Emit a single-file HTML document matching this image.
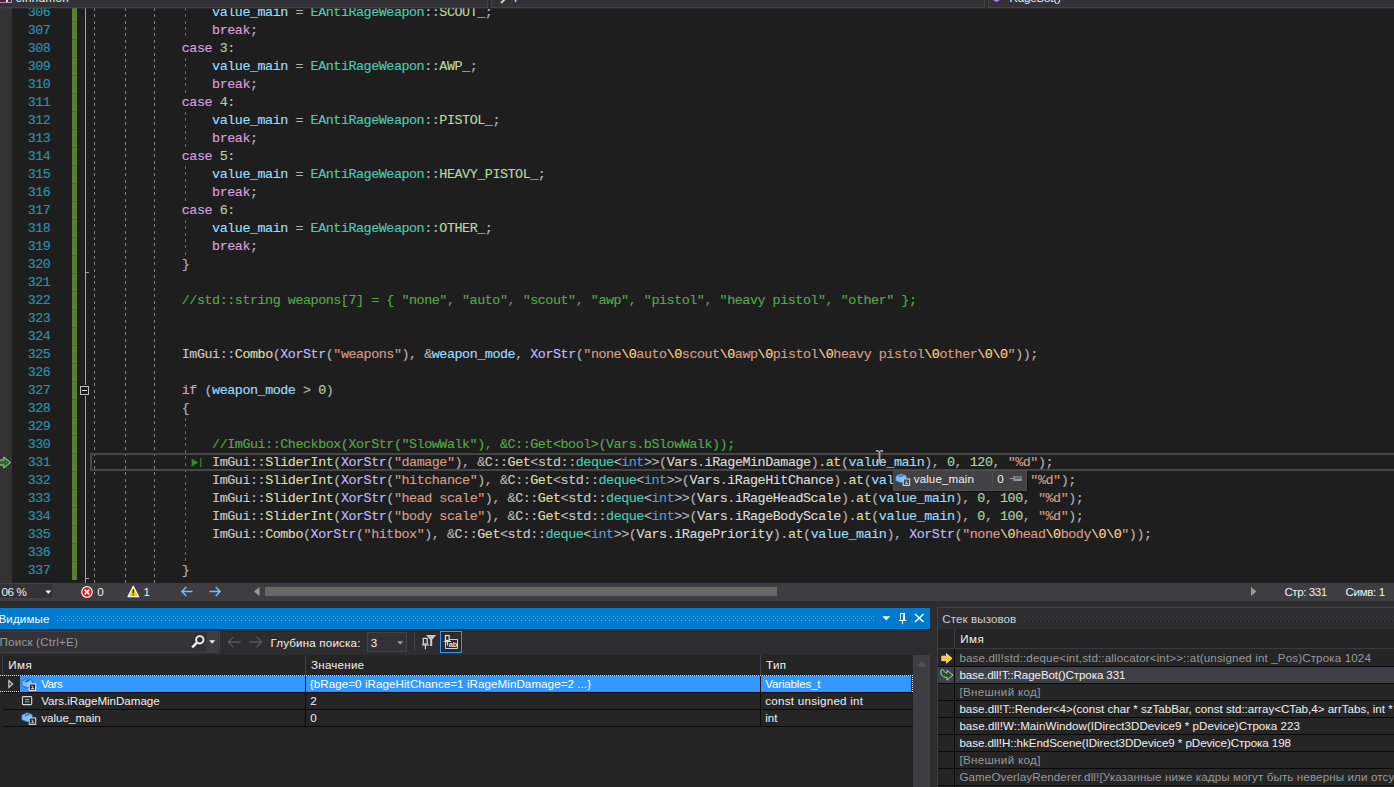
<!DOCTYPE html>
<html lang="ru"><head><meta charset="utf-8"><title>Visual Studio</title>
<style>
html,body{margin:0;padding:0;background:#1e1e1e;overflow:hidden}
html{width:1394px;height:787px}
body{width:1394px;height:787px;position:relative;overflow:hidden;font-family:"Liberation Sans",sans-serif;font-size:12px;color:#f1f1f1}
.a{position:absolute;box-sizing:content-box}
svg.a{overflow:visible}
.g{position:absolute;width:1px;background:repeating-linear-gradient(180deg,#828282 0 3px,transparent 3px 6.36px)}
.g2{position:absolute;width:1px;background:repeating-linear-gradient(180deg,#6a6a6a 0 3px,transparent 3px 6.36px)}
.ln,.cl{position:absolute;height:18px;line-height:18px;font-family:"Liberation Mono",monospace;font-size:13.4px;letter-spacing:-0.4613px;white-space:pre;margin-top:0.0px;-webkit-text-stroke:0.15px}
.ln{left:0;width:50.36px;text-align:right;color:#2b91af}
.cl{left:90.9px;color:#dcdcdc}
.u{position:absolute;white-space:pre;line-height:16px;height:16px}
.c{color:#d8a0df}.k{color:#569cd6}.v{color:#9cdcfe}.t{color:#4ec9b0}.e{color:#b8d7a3}.o{color:#b4b4b4}
.n{color:#b5cea8}.s{color:#d69d85}.x{color:#ffd68f}.f{color:#dcdcaa}.m{color:#beb7ff}.ns{color:#c8c8c8}.i{color:#dadada}.cm{color:#57a64a}
.dots{position:absolute;background-image:radial-gradient(circle at 0.5px 0.5px,#59a8de 0.55px,transparent 0.8px),radial-gradient(circle at 0.5px 0.5px,#59a8de 0.55px,transparent 0.8px);background-size:4px 4px;background-position:0 0,2px 2px}
.dots2{position:absolute;background-image:radial-gradient(circle at 0.5px 0.5px,#46464a 0.55px,transparent 0.8px),radial-gradient(circle at 0.5px 0.5px,#46464a 0.55px,transparent 0.8px);background-size:4px 4px;background-position:0 0,2px 2px}
.dot-h{position:absolute;height:1px;background:repeating-linear-gradient(90deg,#e8e8e8 0 1px,transparent 1px 2px)}
</style></head>
<body>
<div class="a" style="left:0;top:0;width:1394px;height:583px;background:#1e1e1e"></div>
<div class="a" style="left:0;top:8px;width:12px;height:575px;background:#333333"></div>
<div class="a" style="left:72px;top:8px;width:5px;height:572px;background:#5a7d32"></div>
<div class="a" style="left:72px;top:21px;width:5px;height:1px;background:#4b6c27"></div>
<div class="a" style="left:72px;top:39px;width:5px;height:1px;background:#4b6c27"></div>
<div class="a" style="left:72px;top:57px;width:5px;height:1px;background:#4b6c27"></div>
<div class="a" style="left:72px;top:75px;width:5px;height:1px;background:#4b6c27"></div>
<div class="a" style="left:72px;top:93px;width:5px;height:1px;background:#4b6c27"></div>
<div class="a" style="left:72px;top:111px;width:5px;height:1px;background:#4b6c27"></div>
<div class="a" style="left:72px;top:129px;width:5px;height:1px;background:#4b6c27"></div>
<div class="a" style="left:72px;top:147px;width:5px;height:1px;background:#4b6c27"></div>
<div class="a" style="left:72px;top:165px;width:5px;height:1px;background:#4b6c27"></div>
<div class="a" style="left:72px;top:183px;width:5px;height:1px;background:#4b6c27"></div>
<div class="a" style="left:72px;top:201px;width:5px;height:1px;background:#4b6c27"></div>
<div class="a" style="left:72px;top:219px;width:5px;height:1px;background:#4b6c27"></div>
<div class="a" style="left:72px;top:237px;width:5px;height:1px;background:#4b6c27"></div>
<div class="a" style="left:72px;top:255px;width:5px;height:1px;background:#4b6c27"></div>
<div class="a" style="left:72px;top:273px;width:5px;height:1px;background:#4b6c27"></div>
<div class="a" style="left:72px;top:291px;width:5px;height:1px;background:#4b6c27"></div>
<div class="a" style="left:72px;top:309px;width:5px;height:1px;background:#4b6c27"></div>
<div class="a" style="left:72px;top:327px;width:5px;height:1px;background:#4b6c27"></div>
<div class="a" style="left:72px;top:345px;width:5px;height:1px;background:#4b6c27"></div>
<div class="a" style="left:72px;top:363px;width:5px;height:1px;background:#4b6c27"></div>
<div class="a" style="left:72px;top:381px;width:5px;height:1px;background:#4b6c27"></div>
<div class="a" style="left:72px;top:399px;width:5px;height:1px;background:#4b6c27"></div>
<div class="a" style="left:72px;top:417px;width:5px;height:1px;background:#4b6c27"></div>
<div class="a" style="left:72px;top:435px;width:5px;height:1px;background:#4b6c27"></div>
<div class="a" style="left:72px;top:453px;width:5px;height:1px;background:#4b6c27"></div>
<div class="a" style="left:72px;top:471px;width:5px;height:1px;background:#4b6c27"></div>
<div class="a" style="left:72px;top:489px;width:5px;height:1px;background:#4b6c27"></div>
<div class="a" style="left:72px;top:507px;width:5px;height:1px;background:#4b6c27"></div>
<div class="a" style="left:72px;top:525px;width:5px;height:1px;background:#4b6c27"></div>
<div class="a" style="left:72px;top:543px;width:5px;height:1px;background:#4b6c27"></div>
<div class="a" style="left:72px;top:561px;width:5px;height:1px;background:#4b6c27"></div>
<div class="a" style="left:85px;top:8px;width:1px;height:575px;background:#a5a5a5"></div>
<div class="a" style="left:86px;top:272px;width:3px;height:1px;background:#a5a5a5"></div>
<div class="a" style="left:86px;top:578px;width:3px;height:1px;background:#a5a5a5"></div>
<div class="g" style="left:94px;top:8px;height:575px"></div>
<div class="g" style="left:125px;top:8px;height:575px"></div>
<div class="g" style="left:154px;top:8px;height:575px"></div>
<div class="g2" style="left:185px;top:8px;height:32px"></div>
<div class="g2" style="left:185px;top:58px;height:36px"></div>
<div class="g2" style="left:185px;top:112px;height:36px"></div>
<div class="g2" style="left:185px;top:166px;height:36px"></div>
<div class="g2" style="left:185px;top:220px;height:36px"></div>
<div class="g2" style="left:185px;top:418px;height:144px"></div>
<div class="a" style="left:90px;top:453px;width:1310px;height:14px;border:2px solid #464646"></div>
<div class="a" style="left:79px;top:385px;width:11px;height:11px;background:#1e1e1e"></div>
<div class="a" style="left:80px;top:386px;width:7px;height:7px;border:1px solid #c0c0c0;background:#1e1e1e"></div>
<div class="a" style="left:82px;top:390px;width:5px;height:1px;background:#e0e0e0"></div>
<div class="ln" style="top:4px">306</div>
<div class="cl" style="top:4px">                <span class="v">value_main</span><span class="o"> = </span><span class="t">EAntiRageWeapon</span><span class="o">::</span><span class="e">SCOUT_</span><span class="o">;</span></div>
<div class="ln" style="top:22px">307</div>
<div class="cl" style="top:22px">                <span class="c">break</span><span class="o">;</span></div>
<div class="ln" style="top:40px">308</div>
<div class="cl" style="top:40px">            <span class="c">case</span> <span class="n">3</span><span class="o">:</span></div>
<div class="ln" style="top:58px">309</div>
<div class="cl" style="top:58px">                <span class="v">value_main</span><span class="o"> = </span><span class="t">EAntiRageWeapon</span><span class="o">::</span><span class="e">AWP_</span><span class="o">;</span></div>
<div class="ln" style="top:76px">310</div>
<div class="cl" style="top:76px">                <span class="c">break</span><span class="o">;</span></div>
<div class="ln" style="top:94px">311</div>
<div class="cl" style="top:94px">            <span class="c">case</span> <span class="n">4</span><span class="o">:</span></div>
<div class="ln" style="top:112px">312</div>
<div class="cl" style="top:112px">                <span class="v">value_main</span><span class="o"> = </span><span class="t">EAntiRageWeapon</span><span class="o">::</span><span class="e">PISTOL_</span><span class="o">;</span></div>
<div class="ln" style="top:130px">313</div>
<div class="cl" style="top:130px">                <span class="c">break</span><span class="o">;</span></div>
<div class="ln" style="top:148px">314</div>
<div class="cl" style="top:148px">            <span class="c">case</span> <span class="n">5</span><span class="o">:</span></div>
<div class="ln" style="top:166px">315</div>
<div class="cl" style="top:166px">                <span class="v">value_main</span><span class="o"> = </span><span class="t">EAntiRageWeapon</span><span class="o">::</span><span class="e">HEAVY_PISTOL_</span><span class="o">;</span></div>
<div class="ln" style="top:184px">316</div>
<div class="cl" style="top:184px">                <span class="c">break</span><span class="o">;</span></div>
<div class="ln" style="top:202px">317</div>
<div class="cl" style="top:202px">            <span class="c">case</span> <span class="n">6</span><span class="o">:</span></div>
<div class="ln" style="top:220px">318</div>
<div class="cl" style="top:220px">                <span class="v">value_main</span><span class="o"> = </span><span class="t">EAntiRageWeapon</span><span class="o">::</span><span class="e">OTHER_</span><span class="o">;</span></div>
<div class="ln" style="top:238px">319</div>
<div class="cl" style="top:238px">                <span class="c">break</span><span class="o">;</span></div>
<div class="ln" style="top:256px">320</div>
<div class="cl" style="top:256px">            <span class="o">}</span></div>
<div class="ln" style="top:274px">321</div>
<div class="ln" style="top:292px">322</div>
<div class="cl" style="top:292px">            <span class="cm">//std::string weapons[7] = { "none", "auto", "scout", "awp", "pistol", "heavy pistol", "other" };</span></div>
<div class="ln" style="top:310px">323</div>
<div class="ln" style="top:328px">324</div>
<div class="ln" style="top:346px">325</div>
<div class="cl" style="top:346px">            <span class="ns">ImGui</span><span class="o">::</span><span class="f">Combo</span><span class="o">(</span><span class="m">XorStr</span><span class="o">(</span><span class="s">"weapons"</span><span class="o">), &amp;</span><span class="v">weapon_mode</span><span class="o">, </span><span class="m">XorStr</span><span class="o">(</span><span class="s">"none</span><span class="x">\0</span><span class="s">auto</span><span class="x">\0</span><span class="s">scout</span><span class="x">\0</span><span class="s">awp</span><span class="x">\0</span><span class="s">pistol</span><span class="x">\0</span><span class="s">heavy pistol</span><span class="x">\0</span><span class="s">other</span><span class="x">\0</span><span class="x">\0</span><span class="s">"</span><span class="o">));</span></div>
<div class="ln" style="top:364px">326</div>
<div class="ln" style="top:382px">327</div>
<div class="cl" style="top:382px">            <span class="c">if</span><span class="o"> (</span><span class="v">weapon_mode</span><span class="o"> &gt; </span><span class="n">0</span><span class="o">)</span></div>
<div class="ln" style="top:400px">328</div>
<div class="cl" style="top:400px">            <span class="o">{</span></div>
<div class="ln" style="top:418px">329</div>
<div class="ln" style="top:436px">330</div>
<div class="cl" style="top:436px">                <span class="cm">//ImGui::Checkbox(XorStr("SlowWalk"), &amp;C::Get&lt;bool&gt;(Vars.bSlowWalk));</span></div>
<div class="ln" style="top:454px">331</div>
<div class="cl" style="top:454px">                <span class="ns">ImGui</span><span class="o">::</span><span class="f">SliderInt</span><span class="o">(</span><span class="m">XorStr</span><span class="o">(</span><span class="s">"damage"</span><span class="o">), &amp;</span><span class="ns">C</span><span class="o">::</span><span class="f">Get</span><span class="o">&lt;</span><span class="ns">std</span><span class="o">::</span><span class="t">deque</span><span class="o">&lt;</span><span class="k">int</span><span class="o">&gt;&gt;(</span><span class="i">Vars</span><span class="o">.</span><span class="i">iRageMinDamage</span><span class="o">).</span><span class="f">at</span><span class="o">(</span><span class="v">value_main</span><span class="o">), </span><span class="n">0</span><span class="o">, </span><span class="n">120</span><span class="o">, </span><span class="s">"%d"</span><span class="o">);</span></div>
<div class="ln" style="top:472px">332</div>
<div class="cl" style="top:472px">                <span class="ns">ImGui</span><span class="o">::</span><span class="f">SliderInt</span><span class="o">(</span><span class="m">XorStr</span><span class="o">(</span><span class="s">"hitchance"</span><span class="o">), &amp;</span><span class="ns">C</span><span class="o">::</span><span class="f">Get</span><span class="o">&lt;</span><span class="ns">std</span><span class="o">::</span><span class="t">deque</span><span class="o">&lt;</span><span class="k">int</span><span class="o">&gt;&gt;(</span><span class="i">Vars</span><span class="o">.</span><span class="i">iRageHitChance</span><span class="o">).</span><span class="f">at</span><span class="o">(</span><span class="v">value_main</span><span class="o">), </span><span class="n">0</span><span class="o">, </span><span class="n">100</span><span class="o">, </span><span class="s">"%d"</span><span class="o">);</span></div>
<div class="ln" style="top:490px">333</div>
<div class="cl" style="top:490px">                <span class="ns">ImGui</span><span class="o">::</span><span class="f">SliderInt</span><span class="o">(</span><span class="m">XorStr</span><span class="o">(</span><span class="s">"head scale"</span><span class="o">), &amp;</span><span class="ns">C</span><span class="o">::</span><span class="f">Get</span><span class="o">&lt;</span><span class="ns">std</span><span class="o">::</span><span class="t">deque</span><span class="o">&lt;</span><span class="k">int</span><span class="o">&gt;&gt;(</span><span class="i">Vars</span><span class="o">.</span><span class="i">iRageHeadScale</span><span class="o">).</span><span class="f">at</span><span class="o">(</span><span class="v">value_main</span><span class="o">), </span><span class="n">0</span><span class="o">, </span><span class="n">100</span><span class="o">, </span><span class="s">"%d"</span><span class="o">);</span></div>
<div class="ln" style="top:508px">334</div>
<div class="cl" style="top:508px">                <span class="ns">ImGui</span><span class="o">::</span><span class="f">SliderInt</span><span class="o">(</span><span class="m">XorStr</span><span class="o">(</span><span class="s">"body scale"</span><span class="o">), &amp;</span><span class="ns">C</span><span class="o">::</span><span class="f">Get</span><span class="o">&lt;</span><span class="ns">std</span><span class="o">::</span><span class="t">deque</span><span class="o">&lt;</span><span class="k">int</span><span class="o">&gt;&gt;(</span><span class="i">Vars</span><span class="o">.</span><span class="i">iRageBodyScale</span><span class="o">).</span><span class="f">at</span><span class="o">(</span><span class="v">value_main</span><span class="o">), </span><span class="n">0</span><span class="o">, </span><span class="n">100</span><span class="o">, </span><span class="s">"%d"</span><span class="o">);</span></div>
<div class="ln" style="top:526px">335</div>
<div class="cl" style="top:526px">                <span class="ns">ImGui</span><span class="o">::</span><span class="f">Combo</span><span class="o">(</span><span class="m">XorStr</span><span class="o">(</span><span class="s">"hitbox"</span><span class="o">), &amp;</span><span class="ns">C</span><span class="o">::</span><span class="f">Get</span><span class="o">&lt;</span><span class="ns">std</span><span class="o">::</span><span class="t">deque</span><span class="o">&lt;</span><span class="k">int</span><span class="o">&gt;&gt;(</span><span class="i">Vars</span><span class="o">.</span><span class="i">iRagePriority</span><span class="o">).</span><span class="f">at</span><span class="o">(</span><span class="v">value_main</span><span class="o">), </span><span class="m">XorStr</span><span class="o">(</span><span class="s">"none</span><span class="x">\0</span><span class="s">head</span><span class="x">\0</span><span class="s">body</span><span class="x">\0</span><span class="x">\0</span><span class="s">"</span><span class="o">));</span></div>
<div class="ln" style="top:544px">336</div>
<div class="ln" style="top:562px">337</div>
<div class="cl" style="top:562px">            <span class="o">}</span></div>
<div class="ln" style="top:580px">338</div>
<svg class="a" style="left:191px;top:458.4px;" width="12" height="10" viewBox="0 0 12 10"><path d="M0.6 0.4 L7.2 4.5 L0.6 8.7z" fill="#2f8c2f"/><rect x="9" y="0" width="1.5" height="9.1" fill="#27782a"/></svg>
<svg class="a" style="left:0px;top:455.5px;" width="12" height="13" viewBox="0 0 12 13"><path d="M-2 4 H3.8 V1 L10.6 6.5 L3.8 12 V9 H-2z" fill="#2b6f2b" stroke="#c4c4c4" stroke-width="1" stroke-linejoin="miter"/></svg>
<svg class="a" style="left:875px;top:450px;" width="9" height="13" viewBox="0 0 9 13"><path d="M1 0.8 H3.6 M5.4 0.8 H8 M1 12.2 H3.6 M5.4 12.2 H8 M4.5 1 V12" stroke="#a8a8a8" stroke-width="1.8" fill="none"/></svg>
<div class="a" style="left:893px;top:470px;width:132px;height:19px;background:#424245;border:1px solid #4d4d50;box-shadow:1px 1px 1px rgba(0,0,0,.35)"></div>
<svg class="a" style="left:895.3px;top:473.2px;" width="16" height="14" viewBox="0 0 16 14"><path d="M0.8 3.8 Q0.8 3.1 1.5 2.7 L5.3 1 Q6 0.7 6.8 0.9 L10.6 2.3 Q11.3 2.6 11.3 3.3 L11.3 7 Q11.3 7.6 10.7 8 L7 9.6 Q6.2 9.9 5.4 9.6 L1.4 8 Q0.8 7.6 0.8 7z" fill="#75beff" stroke="#2f6fae" stroke-width="0.7"/><path d="M4.4 3.5 L7.6 2.3" stroke="#2f6fae" stroke-width="1.3" fill="none" stroke-linecap="round"/><rect x="8.2" y="5.9" width="6.4" height="6.5" fill="#424245" stroke="#d4d4d4" stroke-width="1.1"/><path d="M10.4 8.2 h1.3 v2.3 M10.1 10.6 h3" stroke="#d4d4d4" stroke-width="0.9" fill="none"/></svg>
<div class="a" style="left:992px;top:472px;width:1px;height:16px;background:#4f4f52"></div>
<svg class="a" style="left:1009px;top:474px;" width="13" height="10" viewBox="0 0 13 10"><path d="M0.4 4.5 H4.8 M4.9 2 V7" stroke="#9a9a9a" stroke-width="1" fill="none"/><rect x="5.4" y="2.9" width="6.6" height="3.4" fill="none" stroke="#9a9a9a" stroke-width="1"/><rect x="5" y="4.7" width="7.5" height="2.1" fill="#9a9a9a"/></svg>
<div class="a" style="left:0;top:0;width:1394px;height:7px;background:#333337;border-bottom:1px solid #434346"></div>
<div class="a" style="left:0;top:8px;width:1394px;height:1px;background:rgba(67,67,70,0.35)"></div>
<div class="a" style="left:487px;top:0;width:3px;height:8px;background:#2d2d30;border-left:1px solid #434346;border-right:1px solid #434346"></div>
<div class="a" style="left:984px;top:0;width:3px;height:8px;background:#2d2d30;border-left:1px solid #434346;border-right:1px solid #434346"></div>
<div class="a" style="left:-1px;top:-10px;width:11px;height:11px;border:1px solid #c586c0"></div>
<div class="a" style="left:6px;top:-6px;width:2px;height:8px;background:#e0e0e0"></div>
<svg class="a" style="left:500px;top:-4px;" width="8" height="8" viewBox="0 0 8 8"><path d="M1 7 L6 2" stroke="#d0d0d0" stroke-width="2"/></svg>
<svg class="a" style="left:992px;top:-6px;" width="9" height="8" viewBox="0 0 9 8"><path d="M1 2 L4.5 0 L8 2 V6 L4.5 8 L1 6z" fill="#b180d7"/></svg>
<div class="a" style="left:0;top:583px;width:1394px;height:18px;background:#3e3e42"></div>
<div class="a" style="left:0;top:601px;width:1394px;height:186px;background:#2d2d30"></div>
<div class="a" style="left:-1px;top:583px;width:53px;height:14px;background:#333337;border:1px solid #434346"></div>
<svg class="a" style="left:45px;top:590px;" width="7" height="5" viewBox="0 0 7 5"><path d="M0.3 0.5 H6.3 L3.3 4z" fill="#f1f1f1"/></svg>
<svg class="a" style="left:80px;top:585px;" width="14" height="14" viewBox="0 0 14 14"><circle cx="7" cy="7" r="5.3" fill="#e51400" stroke="#f6f6f6" stroke-width="1.2"/><path d="M4.7 4.7 L9.3 9.3 M9.3 4.7 L4.7 9.3" stroke="#fff" stroke-width="1.7"/></svg>
<svg class="a" style="left:127px;top:585px;" width="13" height="13" viewBox="0 0 13 13"><path d="M6.3 1.2 L11.6 11.6 H1 z" fill="#ffcc00" stroke="#f6f6f6" stroke-width="1.2" stroke-linejoin="round"/><path d="M6.3 4.6 V8.3 M6.3 9.3 V10.6" stroke="#1e1e1e" stroke-width="1.4"/></svg>
<svg class="a" style="left:181px;top:586px;" width="12" height="11" viewBox="0 0 12 11"><path d="M11.5 5.5 H1.2 M5.3 1 L0.9 5.5 L5.3 10" stroke="#75beff" stroke-width="1.4" fill="none"/></svg>
<svg class="a" style="left:208.9px;top:586px;" width="12" height="11" viewBox="0 0 12 11"><path d="M0.5 5.5 H10.8 M6.7 1 L11.1 5.5 L6.7 10" stroke="#75beff" stroke-width="1.4" fill="none"/></svg>
<svg class="a" style="left:254px;top:587px;" width="6" height="9" viewBox="0 0 6 9"><path d="M5.5 0 V9 L0 4.5z" fill="#999999"/></svg>
<div class="a" style="left:265px;top:587px;width:512px;height:9px;background:#686868"></div>
<svg class="a" style="left:1251px;top:587px;" width="6" height="9" viewBox="0 0 6 9"><path d="M0 0 V9 L5.5 4.5z" fill="#999999"/></svg>
<div class="a" style="left:0;top:608px;width:930px;height:21px;background:#007acc"></div>
<div class="dots" style="left:57px;top:616px;width:818px;height:5px"></div>
<svg class="a" style="left:882px;top:616px;" width="9" height="5" viewBox="0 0 9 5"><path d="M0.3 0.3 H8.3 L4.3 4.5z" fill="#fff"/></svg>
<svg class="a" style="left:899px;top:613px;" width="8" height="12" viewBox="0 0 8 12"><path d="M1.5 6.5 V0.5 H5.5 V6.5" stroke="#fff" stroke-width="1" fill="none"/><rect x="4" y="0" width="2" height="7" fill="#fff"/><rect x="0" y="7" width="7.4" height="1" fill="#fff"/><rect x="3" y="8" width="1" height="3.2" fill="#fff"/></svg>
<svg class="a" style="left:914px;top:613px;" width="11" height="10" viewBox="0 0 11 10"><path d="M1 1 L9.5 9 M9.5 1 L1 9" stroke="#fff" stroke-width="1.5"/></svg>
<div class="a" style="left:0;top:629px;width:930px;height:26px;background:#2d2d30"></div>
<div class="a" style="left:-1px;top:631px;width:219px;height:20px;background:#333337;border:1px solid #3f3f46"></div>
<svg class="a" style="left:191px;top:635px;" width="14" height="14" viewBox="0 0 14 14"><circle cx="8.8" cy="4.8" r="3.7" fill="none" stroke="#f1f1f1" stroke-width="1.9"/><path d="M6 7.6 L1.2 12.4" stroke="#f1f1f1" stroke-width="2.4"/></svg>
<div class="a" style="left:207px;top:632px;width:11px;height:20px;background:#3e3e42"></div>
<svg class="a" style="left:209px;top:640px;" width="7" height="4" viewBox="0 0 7 4"><path d="M0.2 0.2 H6.2 L3.2 3.7z" fill="#f1f1f1"/></svg>
<svg class="a" style="left:227px;top:636px;" width="14" height="12" viewBox="0 0 14 12"><path d="M13.8 6 H1.5 M6.5 0.8 L1.2 6 L6.5 11.2" stroke="#555558" stroke-width="1.3" fill="none"/></svg>
<svg class="a" style="left:249px;top:636px;" width="14" height="12" viewBox="0 0 14 12"><path d="M0.2 6 H12.5 M7.5 0.8 L12.8 6 L7.5 11.2" stroke="#555558" stroke-width="1.3" fill="none"/></svg>
<div class="a" style="left:367px;top:632px;width:38px;height:18px;background:#333337;border:1px solid #434346"></div>
<svg class="a" style="left:397px;top:641px;" width="7" height="4" viewBox="0 0 7 4"><path d="M0.2 0.2 H6.2 L3.2 3.7z" fill="#999"/></svg>
<div class="a" style="left:414px;top:633px;width:1px;height:18px;background:#46464a"></div>
<svg class="a" style="left:421px;top:634px;" width="16" height="16" viewBox="0 0 16 16"><path d="M5 1.1 H15.2 L11.2 5.8 V12 H9.1 V5.8z" fill="#c8c8c8"/><rect x="2.3" y="4.4" width="3.9" height="5.6" fill="#2d2d30" stroke="#dedede" stroke-width="1.2"/><path d="M0.9 11 H8.2 M4.4 11 V15.2" stroke="#dedede" stroke-width="1.1"/></svg>
<div class="a" style="left:440px;top:631px;width:20px;height:20px;background:#2d2d30;border:1px solid #3399ff;box-shadow:inset 0 0 0 1px #242220"></div>
<svg class="a" style="left:443px;top:634px;" width="16" height="16" viewBox="0 0 16 16"><path d="M6 5.5 H14.5 V14.5 H2.5 V8" fill="none" stroke="#d0d0d0" stroke-width="1"/><rect x="2.5" y="1.5" width="3.6" height="5" fill="#2d2d30" stroke="#dedede" stroke-width="1.2"/><path d="M0.8 7.5 H8 M4.4 7.5 V11.4" stroke="#dedede" stroke-width="1.1"/><text x="5.8" y="12.7" font-family="Liberation Sans, sans-serif" font-size="7.5" font-weight="bold" fill="#e0e0e0" letter-spacing="-0.2">ab</text></svg>
<div class="a" style="left:0;top:655px;width:930px;height:132px;background:#252526"></div>
<div class="a" style="left:2px;top:655px;width:1px;height:20px;background:#3f3f46"></div>
<div class="a" style="left:305px;top:655px;width:1px;height:20px;background:#3f3f46"></div>
<div class="a" style="left:760px;top:655px;width:1px;height:20px;background:#3f3f46"></div>
<div class="a" style="left:913px;top:655px;width:17px;height:132px;background:#3e3e42"></div>
<svg class="a" style="left:917px;top:661px;" width="10" height="6" viewBox="0 0 10 6"><path d="M0 5.5 H9.4 L4.7 0z" fill="#55555a"/></svg>
<div class="a" style="left:20px;top:676px;width:285px;height:15px;background:#3399ff"></div>
<div class="a" style="left:306px;top:676px;width:454px;height:15px;background:#3399ff"></div>
<div class="a" style="left:761px;top:676px;width:150px;height:15px;background:#3399ff"></div>
<div class="dot-h" style="left:0;top:675px;width:913px"></div>
<div class="dot-h" style="left:0;top:691px;width:20px"></div>
<div class="a" style="left:20px;top:691px;width:893px;height:1px;background:repeating-linear-gradient(90deg,#cc6600 0 1px,#3399ff 1px 2px)"></div>
<div class="a" style="left:912px;top:675px;width:1px;height:17px;background:repeating-linear-gradient(180deg,#e8e8e8 0 1px,transparent 1px 2px)"></div>
<div class="a" style="left:3px;top:692px;width:910px;height:1px;background:#0a0a0a"></div>
<div class="a" style="left:3px;top:709px;width:910px;height:1px;background:#0a0a0a"></div>
<div class="a" style="left:3px;top:726px;width:910px;height:1px;background:#0a0a0a"></div>
<div class="a" style="left:305px;top:676px;width:1px;height:51px;background:#0a0a0a"></div>
<div class="a" style="left:760px;top:676px;width:1px;height:51px;background:#0a0a0a"></div>
<svg class="a" style="left:8.4px;top:680px;" width="6" height="9" viewBox="0 0 6 9"><path d="M0.9 0.6 L4.6 4 L0.9 7.4z" fill="none" stroke="#d0d0d0" stroke-width="1.2"/></svg>
<svg class="a" style="left:21px;top:678px;" width="16" height="14" viewBox="0 0 16 14"><path d="M0.8 3.8 Q0.8 3.1 1.5 2.7 L5.3 1 Q6 0.7 6.8 0.9 L10.6 2.3 Q11.3 2.6 11.3 3.3 L11.3 7 Q11.3 7.6 10.7 8 L7 9.6 Q6.2 9.9 5.4 9.6 L1.4 8 Q0.8 7.6 0.8 7z" fill="#75beff" stroke="#1d4f86" stroke-width="0.7"/><path d="M4.4 3.5 L7.6 2.3" stroke="#1d4f86" stroke-width="1.3" fill="none" stroke-linecap="round"/><rect x="8.2" y="5.9" width="6.4" height="6.5" fill="#252526" stroke="#e4e4e4" stroke-width="1.1"/><path d="M10.4 8.2 h1.3 v2.3 M10.1 10.6 h3" stroke="#e4e4e4" stroke-width="0.9" fill="none"/></svg>
<svg class="a" style="left:22px;top:696px;" width="11" height="10" viewBox="0 0 11 10"><rect x="0.5" y="0.6" width="9.2" height="8" rx="0.8" fill="none" stroke="#d8d8d8" stroke-width="1.1"/><path d="M3 3.6 H7.3 M3 5.8 H7.3" stroke="#75beff" stroke-width="1"/></svg>
<svg class="a" style="left:21px;top:712.3px;" width="16" height="14" viewBox="0 0 16 14"><path d="M0.8 3.8 Q0.8 3.1 1.5 2.7 L5.3 1 Q6 0.7 6.8 0.9 L10.6 2.3 Q11.3 2.6 11.3 3.3 L11.3 7 Q11.3 7.6 10.7 8 L7 9.6 Q6.2 9.9 5.4 9.6 L1.4 8 Q0.8 7.6 0.8 7z" fill="#75beff" stroke="#2f6fae" stroke-width="0.7"/><path d="M4.4 3.5 L7.6 2.3" stroke="#2f6fae" stroke-width="1.3" fill="none" stroke-linecap="round"/><rect x="8.2" y="5.9" width="6.4" height="6.5" fill="#252526" stroke="#d4d4d4" stroke-width="1.1"/><path d="M10.4 8.2 h1.3 v2.3 M10.1 10.6 h3" stroke="#d4d4d4" stroke-width="0.9" fill="none"/></svg>
<div class="a" style="left:937px;top:607px;width:460px;height:21px;background:#2d2d30;border:1px solid #3f3f46"></div>
<div class="dots2" style="left:1024px;top:616px;width:370px;height:5px"></div>
<div class="a" style="left:938px;top:629px;width:456px;height:158px;background:#252526"></div>
<div class="a" style="left:937px;top:629px;width:1px;height:158px;background:#3f3f46"></div>
<div class="a" style="left:938px;top:648px;width:456px;height:1px;background:#3a3a3f"></div>
<div class="a" style="left:954px;top:629px;width:1px;height:19px;background:#3f3f46"></div>
<div class="a" style="left:938px;top:667px;width:456px;height:16px;background:#3f3f46"></div>
<div class="a" style="left:938px;top:666px;width:456px;height:1px;background:#0a0a0a"></div>
<div class="a" style="left:938px;top:683px;width:456px;height:1px;background:#0a0a0a"></div>
<div class="a" style="left:938px;top:700px;width:456px;height:1px;background:#0a0a0a"></div>
<div class="a" style="left:938px;top:717px;width:456px;height:1px;background:#0a0a0a"></div>
<div class="a" style="left:938px;top:734px;width:456px;height:1px;background:#0a0a0a"></div>
<div class="a" style="left:938px;top:751px;width:456px;height:1px;background:#0a0a0a"></div>
<div class="a" style="left:938px;top:768px;width:456px;height:1px;background:#0a0a0a"></div>
<div class="a" style="left:938px;top:785px;width:456px;height:1px;background:#0a0a0a"></div>
<div class="a" style="left:954px;top:649px;width:1px;height:138px;background:#0a0a0a"></div>
<svg class="a" style="left:940.6px;top:652.6px;" width="12" height="11" viewBox="0 0 12 11"><path d="M0.8 3.2 H5.4 V0.7 L11 5.4 L5.4 10.1 V7.6 H0.8z" fill="#ffcc11" stroke="#efe7c8" stroke-width="0.9"/></svg>
<svg class="a" style="left:939.6px;top:668.6px;" width="14" height="12" viewBox="0 0 14 12"><path d="M1.2 0.9 C0.2 4.6 1.6 8.5 7 8.5 V11.2 L13 6.1 L7 1.3 V4 C5.4 4 4.3 3.2 3.7 1.1 Q2.4 0 1.2 0.9z" fill="#1f5d1f" stroke="#c4c4c4" stroke-width="1"/></svg>
<div class="u" style="left:913.75px;top:471.08px;color:#f1f1f1;font-size:11.6px;letter-spacing:0.090px;">value_main</div>
<div class="u" style="left:997.2px;top:471.08px;color:#f1f1f1;font-size:11.6px;">0</div>
<div class="u" style="left:15.8px;top:-9.92px;color:#f1f1f1;font-size:11.6px;letter-spacing:0.390px;">cinnamon</div>
<div class="u" style="left:512px;top:-9.92px;color:#f1f1f1;font-size:11.6px;">T</div>
<div class="u" style="left:1009.6px;top:-9.92px;color:#f1f1f1;font-size:11.6px;letter-spacing:-0.205px;">RageBot()</div>
<div class="u" style="left:1.5px;top:584.08px;color:#f1f1f1;font-size:11.6px;letter-spacing:-0.359px;">06 %</div>
<div class="u" style="left:97.3px;top:584.08px;color:#f1f1f1;font-size:11.6px;">0</div>
<div class="u" style="left:143.4px;top:584.08px;color:#f1f1f1;font-size:11.6px;">1</div>
<div class="u" style="left:1284.4px;top:584.08px;color:#f1f1f1;font-size:11.6px;letter-spacing:-0.453px;">Стр: 331</div>
<div class="u" style="left:1345.6px;top:584.08px;color:#f1f1f1;font-size:11.6px;letter-spacing:-0.382px;">Симв: 1</div>
<div class="u" style="left:-1.5px;top:611.08px;color:#ffffff;font-size:11.6px;letter-spacing:0.114px;">Видимые</div>
<div class="u" style="left:-0.5px;top:634.08px;color:#999999;font-size:11.6px;letter-spacing:0.206px;">Поиск (Ctrl+E)</div>
<div class="u" style="left:270.4px;top:635.08px;color:#f1f1f1;font-size:11.6px;letter-spacing:0.179px;">Глубина поиска:</div>
<div class="u" style="left:370.8px;top:635.08px;color:#f1f1f1;font-size:11.6px;">3</div>
<div class="u" style="left:8.2px;top:657.08px;color:#f1f1f1;font-size:11.6px;letter-spacing:0.469px;">Имя</div>
<div class="u" style="left:311px;top:657.08px;color:#f1f1f1;font-size:11.6px;letter-spacing:0.235px;">Значение</div>
<div class="u" style="left:766px;top:657.08px;color:#f1f1f1;font-size:11.6px;letter-spacing:0.391px;">Тип</div>
<div class="u" style="left:41.2px;top:676.08px;color:#ffffff;font-size:11.6px;letter-spacing:-0.496px;">Vars</div>
<div class="u" style="left:41.2px;top:693.08px;color:#f1f1f1;font-size:11.6px;letter-spacing:-0.026px;">Vars.iRageMinDamage</div>
<div class="u" style="left:41.2px;top:710.08px;color:#f1f1f1;font-size:11.6px;letter-spacing:0.030px;">value_main</div>
<div class="u" style="left:309.8px;top:676.08px;color:#ffffff;font-size:11.6px;letter-spacing:0.068px;">{bRage=0 iRageHitChance=1 iRageMinDamage=2 ...}</div>
<div class="u" style="left:310.3px;top:693.08px;color:#f1f1f1;font-size:11.6px;">2</div>
<div class="u" style="left:310.3px;top:710.08px;color:#f1f1f1;font-size:11.6px;">0</div>
<div class="u" style="left:765.3px;top:676.08px;color:#ffffff;font-size:11.6px;letter-spacing:-0.196px;">Variables_t</div>
<div class="u" style="left:765.3px;top:693.08px;color:#f1f1f1;font-size:11.6px;letter-spacing:0.252px;">const unsigned int</div>
<div class="u" style="left:765.3px;top:710.08px;color:#f1f1f1;font-size:11.6px;">int</div>
<div class="u" style="left:942.3px;top:611.08px;color:#d0d0d0;font-size:11.6px;letter-spacing:0.078px;">Стек вызовов</div>
<div class="u" style="left:960.2px;top:631.08px;color:#f1f1f1;font-size:11.6px;letter-spacing:0.469px;">Имя</div>
<div class="u" style="left:959.4px;top:650.08px;color:#999999;font-size:11.6px;letter-spacing:0.133px;">base.dll!std::deque&lt;int,std::allocator&lt;int&gt;&gt;::at(unsigned int _Pos)Строка 1024</div>
<div class="u" style="left:959.4px;top:667.08px;color:#f1f1f1;font-size:11.6px;letter-spacing:-0.103px;">base.dll!T::RageBot()Строка 331</div>
<div class="u" style="left:959.4px;top:684.08px;color:#999999;font-size:11.6px;letter-spacing:0.325px;">[Внешний код]</div>
<div class="u" style="left:959.4px;top:701.08px;color:#f1f1f1;font-size:11.6px;letter-spacing:-0.005px;">base.dll!T::Render&lt;4&gt;(const char * szTabBar, const std::array&lt;CTab,4&gt; arrTabs, int * </div>
<div class="u" style="left:959.4px;top:718.08px;color:#f1f1f1;font-size:11.6px;letter-spacing:0.035px;">base.dll!W::MainWindow(IDirect3DDevice9 * pDevice)Строка 223</div>
<div class="u" style="left:959.4px;top:735.08px;color:#f1f1f1;font-size:11.6px;letter-spacing:-0.064px;">base.dll!H::hkEndScene(IDirect3DDevice9 * pDevice)Строка 198</div>
<div class="u" style="left:959.4px;top:752.08px;color:#999999;font-size:11.6px;letter-spacing:0.325px;">[Внешний код]</div>
<div class="u" style="left:959.4px;top:769.08px;color:#999999;font-size:11.6px;letter-spacing:0.115px;">GameOverlayRenderer.dll![Указанные ниже кадры могут быть неверны или отсу</div>
</body></html>
